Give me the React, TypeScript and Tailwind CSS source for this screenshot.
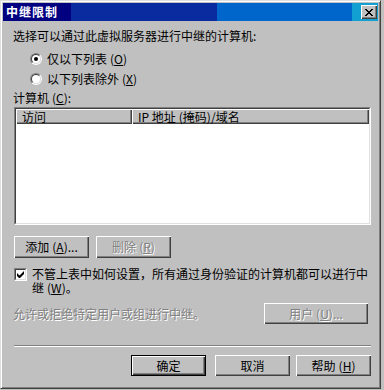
import type { ReactNode } from 'react';

function Btn({
  children,
  disabled,
  primary,
  className = '',
}: {
  children: ReactNode;
  disabled?: boolean;
  primary?: boolean;
  className?: string;
}) {
  return (
    <button
      className={`flex items-center justify-center bg-[#c0c0c0] text-[12px] leading-none shadow-[inset_1px_1px_#fff,inset_-1px_-1px_#404040,inset_-2px_-2px_#808080] ${
        primary ? 'border border-black' : ''
      } ${disabled ? 'text-[#808080] [text-shadow:1px_1px_#fff]' : 'text-black'} ${className}`}
    >
      {children}
    </button>
  );
}

function Radio({ checked }: { checked?: boolean }) {
  return (
    <span className="flex h-[12px] w-[12px] rounded-full border border-t-[#808080] border-l-[#808080] border-r-white border-b-white">
      <span className="flex flex-1 items-center justify-center rounded-full border border-t-[#404040] border-l-[#404040] border-r-[#dfdfdf] border-b-[#dfdfdf] bg-white">
        {checked && <span className="h-[4px] w-[4px] rounded-full bg-black" />}
      </span>
    </span>
  );
}

// mnemonic key like (O) with the letter underlined
function Key({ k }: { k: string }) {
  return (
    <span className="ml-[3px]">
      (<u>{k}</u>)
    </span>
  );
}

export default function App() {
  return (
    <div className="h-[390px] w-[384px] bg-[#c0c0c0] font-['Noto_Sans_CJK_SC','Noto_Sans',sans-serif] text-[12px] text-black">
      <div className="flex h-[389px] w-[381px] flex-col border border-t-[#dfdfdf] border-l-[#dfdfdf] border-r-[#404040] border-b-[#404040] shadow-[inset_1px_1px_#fff,inset_-1px_-1px_#808080] p-[2px]">
        {/* Title bar */}
        <div className="flex h-[18px] items-center justify-between bg-[linear-gradient(to_right,#000080_18%,#0a2aa0_18%,#0a2aa0_57%,#0066cc_57%,#0066cc_93%,#12a0d2_93%)] pl-[3px] pr-[1px]">
          <span className="text-[12px] font-bold leading-none tracking-[1px] text-white">中继限制</span>
          <span className="flex h-[14px] w-[16px] items-center justify-center bg-[#c0c0c0] shadow-[inset_1px_1px_#fff,inset_-1px_-1px_#404040,inset_-2px_-2px_#808080]">
            <svg width="8" height="7" viewBox="0 0 8 7">
              <path d="M0 0h2v1h1v1h2V1h1V0h2v1H7v1H6v1H5v1h1v1h1v1h1v1H6V6H5V5H3v1H2v1H0V6h1V5h1V4h1V3H2V2H1V1H0z" fill="#000" />
            </svg>
          </span>
        </div>

        {/* Content */}
        <div className="ml-[10px] flex w-[358px] flex-col">
          <div className="mt-[7px] h-[16px] leading-[16px]">选择可以通过此虚拟服务器进行中继的计算机:</div>

          <div className="mt-[5px] flex h-[20px] items-center pl-[17px]">
            <Radio checked />
            <span className="ml-[5px]">
              仅以下列表<Key k="O" />
            </span>
          </div>
          <div className="flex h-[20px] items-center pl-[17px]">
            <Radio />
            <span className="ml-[5px]">
              以下列表除外<Key k="X" />
            </span>
          </div>

          <div className="mt-[1px] h-[16px] leading-[16px]">
            计算机<Key k="C" />:
          </div>

          {/* List box */}
          <div className="ml-[1px] mt-[1px] h-[118px] w-[357px] border border-t-[#808080] border-l-[#808080] border-r-white border-b-white">
            <div className="h-full border border-t-[#404040] border-l-[#404040] border-r-[#dfdfdf] border-b-[#dfdfdf] bg-white">
              <div className="flex h-[15px] w-[353px]">
                <div className="w-[116px] bg-[#c0c0c0] pl-[6px] leading-[15px] shadow-[inset_1px_1px_#fff,inset_-1px_-1px_#404040,inset_-2px_-2px_#808080]">
                  访问
                </div>
                <div className="flex-1 bg-[#c0c0c0] pl-[6px] leading-[15px] shadow-[inset_1px_1px_#fff,inset_-1px_-1px_#404040,inset_-2px_-2px_#808080]">
                  IP 地址<span className="ml-[3px]">(掩码)/域名</span>
                </div>
              </div>
            </div>
          </div>

          <div className="ml-[1px] mt-[11px] flex gap-[7px]">
            <Btn className="h-[22px] w-[75px]">
              添加<Key k="A" />...
            </Btn>
            <Btn disabled className="h-[22px] w-[75px]">
              删除<Key k="R" />
            </Btn>
          </div>

          <div className="ml-[1px] mt-[9px] flex items-start">
            <span className="mt-[1px] flex h-[13px] w-[13px] border border-t-[#808080] border-l-[#808080] border-r-white border-b-white">
              <span className="flex flex-1 items-center justify-center border border-t-[#404040] border-l-[#404040] border-r-[#dfdfdf] border-b-[#dfdfdf] bg-white">
                <svg width="7" height="7" viewBox="0 0 7 7">
                  <path d="M0 2v3l2 2h1l4-4V0L2.5 4.5z" fill="#000" />
                </svg>
              </span>
            </span>
            <span className="ml-[5px] whitespace-nowrap leading-[14px]">
              不管上表中如何设置，所有通过身份验证的计算机都可以进行中
              <br />
              继<Key k="W" />。
            </span>
          </div>

          <div className="mt-[8px] flex items-center justify-between">
            <span className="text-[#808080] [text-shadow:1px_1px_#fff]">允许或拒绝特定用户或组进行中继。</span>
            <Btn disabled className="mr-[3px] h-[21px] w-[104px]">
              用户<Key k="U" />...
            </Btn>
          </div>

          <div className="ml-[1px] mt-[21px] h-[2px] w-[357px] border-t border-t-[#808080] border-b border-b-white" />

          <div className="mt-[8px] flex">
            <Btn primary className="ml-[118px] h-[21px] w-[75px]">
              确定
            </Btn>
            <Btn className="ml-[9px] h-[21px] w-[75px]">取消</Btn>
            <Btn className="ml-[6px] h-[21px] w-[75px]">
              帮助<Key k="H" />
            </Btn>
          </div>
        </div>
      </div>
    </div>
  );
}
